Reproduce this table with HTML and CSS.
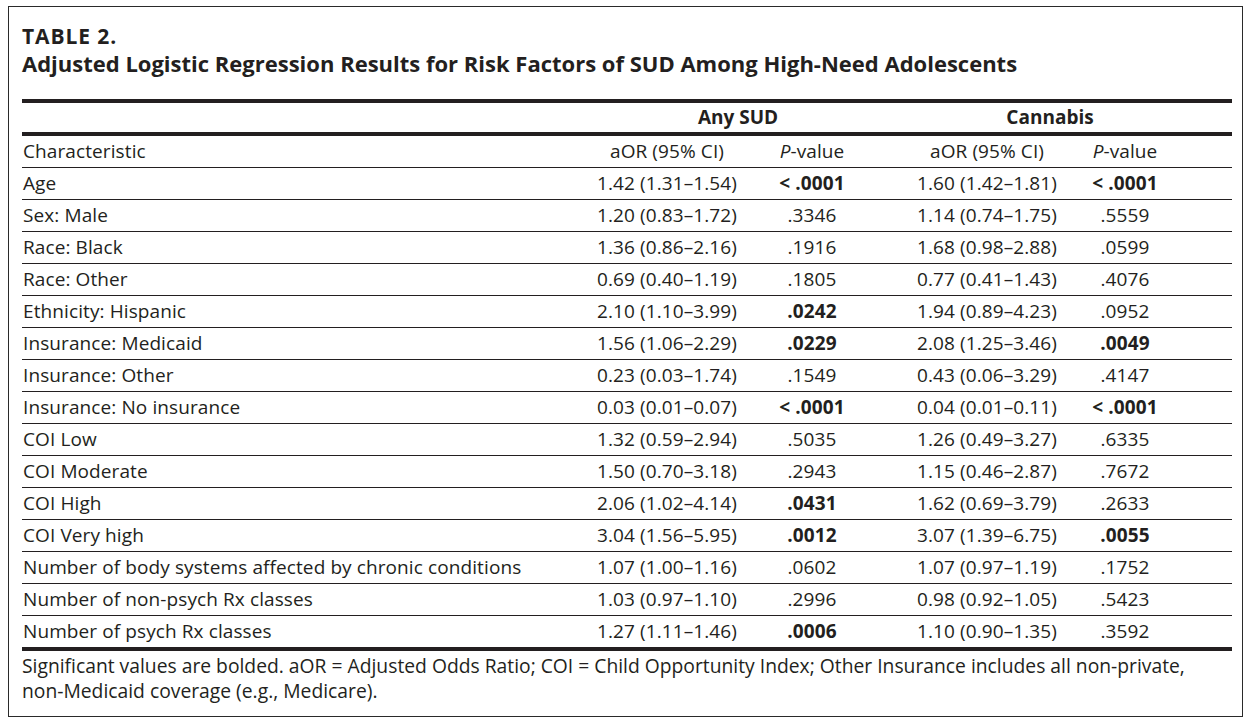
FILE: index.html
```html
<!DOCTYPE html>
<html lang="en">
<head>
<meta charset="utf-8">
<title>Table 2</title>
<link rel="stylesheet" href="styles.css">
</head>
<body>
<div class="frame">
  <div class="label">TABLE 2.</div>
  <div class="title">Adjusted Logistic Regression Results for Risk Factors of SUD Among High-Need Adolescents</div>
  <table class="results">
    <colgroup>
      <col class="c-char">
      <col class="c-aor">
      <col class="c-p">
      <col class="c-aor2">
      <col class="c-p2">
    </colgroup>
    <thead>
      <tr class="group-row">
        <th></th>
        <th colspan="2" class="grp grp-sud">Any SUD</th>
        <th colspan="2" class="grp grp-can">Cannabis</th>
      </tr>
      <tr class="sub-row">
        <td class="name">Characteristic</td>
        <td class="num">aOR (95% CI)</td>
        <td class="num"><i>P</i>-value</td>
        <td class="num num-l">aOR (95% CI)</td>
        <td class="num num-r"><i>P</i>-value</td>
      </tr>
    </thead>
    <tbody>
      <tr><td class="name">Age</td><td class="num">1.42 (1.31–1.54)</td><td class="num"><b>&lt; .0001</b></td><td class="num num-l">1.60 (1.42–1.81)</td><td class="num num-r"><b>&lt; .0001</b></td></tr>
      <tr><td class="name">Sex: Male</td><td class="num">1.20 (0.83–1.72)</td><td class="num">.3346</td><td class="num num-l">1.14 (0.74–1.75)</td><td class="num num-r">.5559</td></tr>
      <tr><td class="name">Race: Black</td><td class="num">1.36 (0.86–2.16)</td><td class="num">.1916</td><td class="num num-l">1.68 (0.98–2.88)</td><td class="num num-r">.0599</td></tr>
      <tr><td class="name">Race: Other</td><td class="num">0.69 (0.40–1.19)</td><td class="num">.1805</td><td class="num num-l">0.77 (0.41–1.43)</td><td class="num num-r">.4076</td></tr>
      <tr><td class="name">Ethnicity: Hispanic</td><td class="num">2.10 (1.10–3.99)</td><td class="num"><b>.0242</b></td><td class="num num-l">1.94 (0.89–4.23)</td><td class="num num-r">.0952</td></tr>
      <tr><td class="name">Insurance: Medicaid</td><td class="num">1.56 (1.06–2.29)</td><td class="num"><b>.0229</b></td><td class="num num-l">2.08 (1.25–3.46)</td><td class="num num-r"><b>.0049</b></td></tr>
      <tr><td class="name">Insurance: Other</td><td class="num">0.23 (0.03–1.74)</td><td class="num">.1549</td><td class="num num-l">0.43 (0.06–3.29)</td><td class="num num-r">.4147</td></tr>
      <tr><td class="name">Insurance: No insurance</td><td class="num">0.03 (0.01–0.07)</td><td class="num"><b>&lt; .0001</b></td><td class="num num-l">0.04 (0.01–0.11)</td><td class="num num-r"><b>&lt; .0001</b></td></tr>
      <tr><td class="name">COI Low</td><td class="num">1.32 (0.59–2.94)</td><td class="num">.5035</td><td class="num num-l">1.26 (0.49–3.27)</td><td class="num num-r">.6335</td></tr>
      <tr><td class="name">COI Moderate</td><td class="num">1.50 (0.70–3.18)</td><td class="num">.2943</td><td class="num num-l">1.15 (0.46–2.87)</td><td class="num num-r">.7672</td></tr>
      <tr><td class="name">COI High</td><td class="num">2.06 (1.02–4.14)</td><td class="num"><b>.0431</b></td><td class="num num-l">1.62 (0.69–3.79)</td><td class="num num-r">.2633</td></tr>
      <tr><td class="name">COI Very high</td><td class="num">3.04 (1.56–5.95)</td><td class="num"><b>.0012</b></td><td class="num num-l">3.07 (1.39–6.75)</td><td class="num num-r"><b>.0055</b></td></tr>
      <tr><td class="name">Number of body systems affected by chronic conditions</td><td class="num">1.07 (1.00–1.16)</td><td class="num">.0602</td><td class="num num-l">1.07 (0.97–1.19)</td><td class="num num-r">.1752</td></tr>
      <tr><td class="name">Number of non-psych Rx classes</td><td class="num">1.03 (0.97–1.10)</td><td class="num">.2996</td><td class="num num-l">0.98 (0.92–1.05)</td><td class="num num-r">.5423</td></tr>
      <tr><td class="name">Number of psych Rx classes</td><td class="num">1.27 (1.11–1.46)</td><td class="num"><b>.0006</b></td><td class="num num-l">1.10 (0.90–1.35)</td><td class="num num-r">.3592</td></tr>
    </tbody>
  </table>
  <p class="note">Significant values are bolded. aOR = Adjusted Odds Ratio; COI = Child Opportunity Index; Other Insurance includes all <span class="nobr">non-private,</span> <span class="nobr">non-Medicaid</span> coverage (e.g., Medicare).</p>
</div>
</body>
</html>
```

FILE: styles.css
```css
html, body {
  margin: 0;
  padding: 0;
  background: #ffffff;
}

body {
  font-family: "Open Sans", "Noto Sans", sans-serif;
  color: #231f20;
}

.frame {
  box-sizing: border-box;
  width: 1235px;
  height: 711px;
  margin: 6px 0 0 8px;
  border: 1px solid #2a2a2a;
  padding: 17px 10px 0 13px;
}

.label {
  font-weight: 700;
  font-size: 21px;
  line-height: 25px;
  letter-spacing: 0.9px;
}

.title {
  font-weight: 700;
  font-size: 22px;
  line-height: 28px;
  letter-spacing: 0;
}

.results {
  width: 1210px;
  margin-top: 22px;
  border-collapse: collapse;
  table-layout: fixed;
  font-size: 19px;
  border-top: 4px solid #231f20;
  border-bottom: 4px solid #231f20;
}

.c-char { width: 571px; }
.c-aor { width: 148px; }
.c-p { width: 142px; }
.c-aor2 { width: 179px; }
.c-p2 { width: 170px; }

.results th,
.results td {
  padding: 0;
  height: 31px;
  line-height: 31px;
  white-space: nowrap;
  font-weight: 400;
  letter-spacing: 0.1px;
}

.results tbody tr {
  border-top: 1px solid #231f20;
}

.group-row th {
  height: 29px;
  line-height: 29px;
}

.group-row .grp {
  font-weight: 700;
  text-align: center;
  letter-spacing: 0;
}

.grp-can {
  padding-left: 29px !important;
  padding-right: 44px !important;
}

.sub-row {
  border-top: 4px solid #231f20;
}

.name {
  text-align: left;
  padding-left: 1px !important;
}

.num {
  text-align: center;
}

.num-l {
  padding-left: 29px !important;
}

.num-r {
  padding-right: 44px !important;
}

.results b {
  font-weight: 700;
}

.note {
  margin: 2px 0 0 0;
  font-size: 19.3px;
  line-height: 25px;
  letter-spacing: 0;
}

.nobr {
  white-space: nowrap;
}
```
